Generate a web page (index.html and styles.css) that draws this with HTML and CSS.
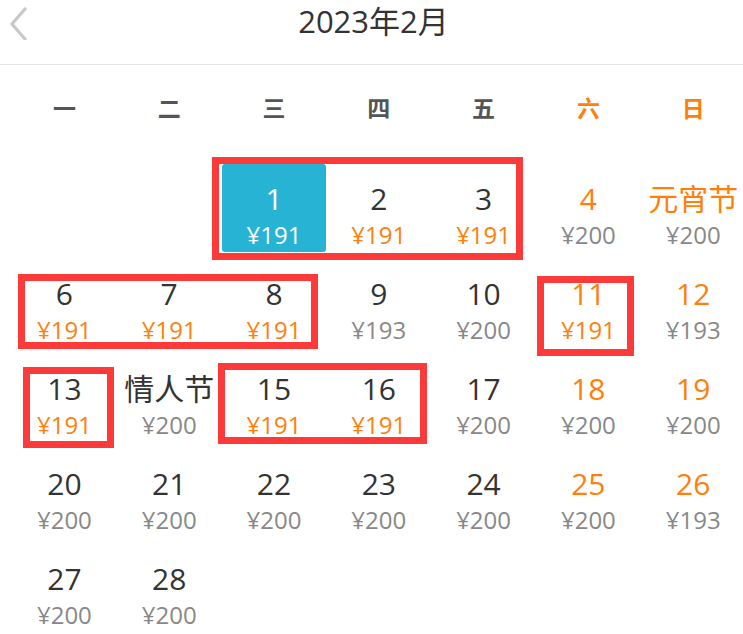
FILE: index.html
```html
<!DOCTYPE html>
<html lang="zh">
<head>
<meta charset="utf-8">
<link rel="stylesheet" href="styles.css">
</head>
<body>
<div class="page">
  <header class="header">
    <svg class="back" width="22" height="34" viewBox="0 0 22 34"><path d="M18 3 L5 18 L18 33" fill="none" stroke="#c8c8c8" stroke-width="3.2" stroke-linecap="round" stroke-linejoin="round"/></svg>
    <div class="title">2023年2月</div>
  </header>
  <div class="weekdays">
    <div>一</div><div>二</div><div>三</div><div>四</div><div>五</div><div class="we">六</div><div class="we">日</div>
  </div>
  <div class="grid">
    <div class="cell empty"></div>
    <div class="cell empty"></div>
    <div class="cell sel"><span class="d">1</span><span class="p">¥191</span></div>
    <div class="cell"><span class="d">2</span><span class="p low">¥191</span></div>
    <div class="cell"><span class="d">3</span><span class="p low">¥191</span></div>
    <div class="cell"><span class="d we">4</span><span class="p">¥200</span></div>
    <div class="cell"><span class="d we">元宵节</span><span class="p">¥200</span></div>

    <div class="cell"><span class="d">6</span><span class="p low">¥191</span></div>
    <div class="cell"><span class="d">7</span><span class="p low">¥191</span></div>
    <div class="cell"><span class="d">8</span><span class="p low">¥191</span></div>
    <div class="cell"><span class="d">9</span><span class="p">¥193</span></div>
    <div class="cell"><span class="d">10</span><span class="p">¥200</span></div>
    <div class="cell"><span class="d we">11</span><span class="p low">¥191</span></div>
    <div class="cell"><span class="d we">12</span><span class="p">¥193</span></div>

    <div class="cell"><span class="d">13</span><span class="p low">¥191</span></div>
    <div class="cell"><span class="d">情人节</span><span class="p">¥200</span></div>
    <div class="cell"><span class="d">15</span><span class="p low">¥191</span></div>
    <div class="cell"><span class="d">16</span><span class="p low">¥191</span></div>
    <div class="cell"><span class="d">17</span><span class="p">¥200</span></div>
    <div class="cell"><span class="d we">18</span><span class="p">¥200</span></div>
    <div class="cell"><span class="d we">19</span><span class="p">¥200</span></div>

    <div class="cell"><span class="d">20</span><span class="p">¥200</span></div>
    <div class="cell"><span class="d">21</span><span class="p">¥200</span></div>
    <div class="cell"><span class="d">22</span><span class="p">¥200</span></div>
    <div class="cell"><span class="d">23</span><span class="p">¥200</span></div>
    <div class="cell"><span class="d">24</span><span class="p">¥200</span></div>
    <div class="cell"><span class="d we">25</span><span class="p">¥200</span></div>
    <div class="cell"><span class="d we">26</span><span class="p">¥193</span></div>

    <div class="cell"><span class="d">27</span><span class="p">¥200</span></div>
    <div class="cell"><span class="d">28</span><span class="p">¥200</span></div>
  </div>

  <div class="mark m1"></div>
  <div class="mark m2"></div>
  <div class="mark m3"></div>
  <div class="mark m4"></div>
  <div class="mark m5"></div>
</div>
</body>
</html>
```

FILE: styles.css
```css
* { box-sizing: border-box; }
html, body { margin: 0; padding: 0; background: #fff; }
body {
  width: 743px;
  height: 634px;
  overflow: hidden;
  font-family: "Open Sans", "Noto Sans CJK SC", sans-serif;
  color: #333;
}
.page {
  position: relative;
  width: 743px;
  height: 634px;
}
.header {
  height: 65px;
  border-bottom: 1px solid #e3e3e3;
  display: flex;
  justify-content: center;
  position: relative;
}
.back {
  position: absolute;
  left: 7px;
  top: 6px;
}
.title {
  font-size: 31px;
  line-height: 42px;
  color: #333;
  padding-left: 4px;
}
.weekdays {
  display: grid;
  grid-template-columns: repeat(7, 104.8px);
  padding-left: 12px;
  height: 99px;
  align-items: center;
  padding-bottom: 22px;
  padding-top: 6px;
  font-family: "Noto Sans CJK SC", sans-serif;
  font-weight: bold;
  font-size: 23px;
  color: #555;
  text-align: center;
}
.weekdays .we { color: #ff7f0a; }
.grid {
  display: grid;
  grid-template-columns: repeat(7, 104.8px);
  grid-auto-rows: 88px;
  row-gap: 7px;
  padding-left: 12px;
}
.cell {
  display: flex;
  flex-direction: column;
  align-items: center;
  padding-top: 17px;
  border-radius: 3px;
}
.d {
  font-size: 30px;
  line-height: 36px;
  color: #333;
}
.d.we { color: #ff7f0a; }
.p {
  font-size: 24px;
  line-height: 36px;
  color: #888;
}
.p.low { color: #ff7f0a; }
.sel { background: #27b4d4; }
.sel .d, .sel .p { color: #fff; }
.mark {
  position: absolute;
  border: 7px solid #fd3a3a;
}
.m1 { left: 212px; top: 157px; width: 311px; height: 103px; }
.m2 { left: 18px; top: 274px; width: 300px; height: 75px; }
.m3 { left: 537px; top: 276px; width: 97px; height: 80px; }
.m4 { left: 23px; top: 367px; width: 91px; height: 81px; }
.m5 { left: 218px; top: 363px; width: 209px; height: 81px; }
```
